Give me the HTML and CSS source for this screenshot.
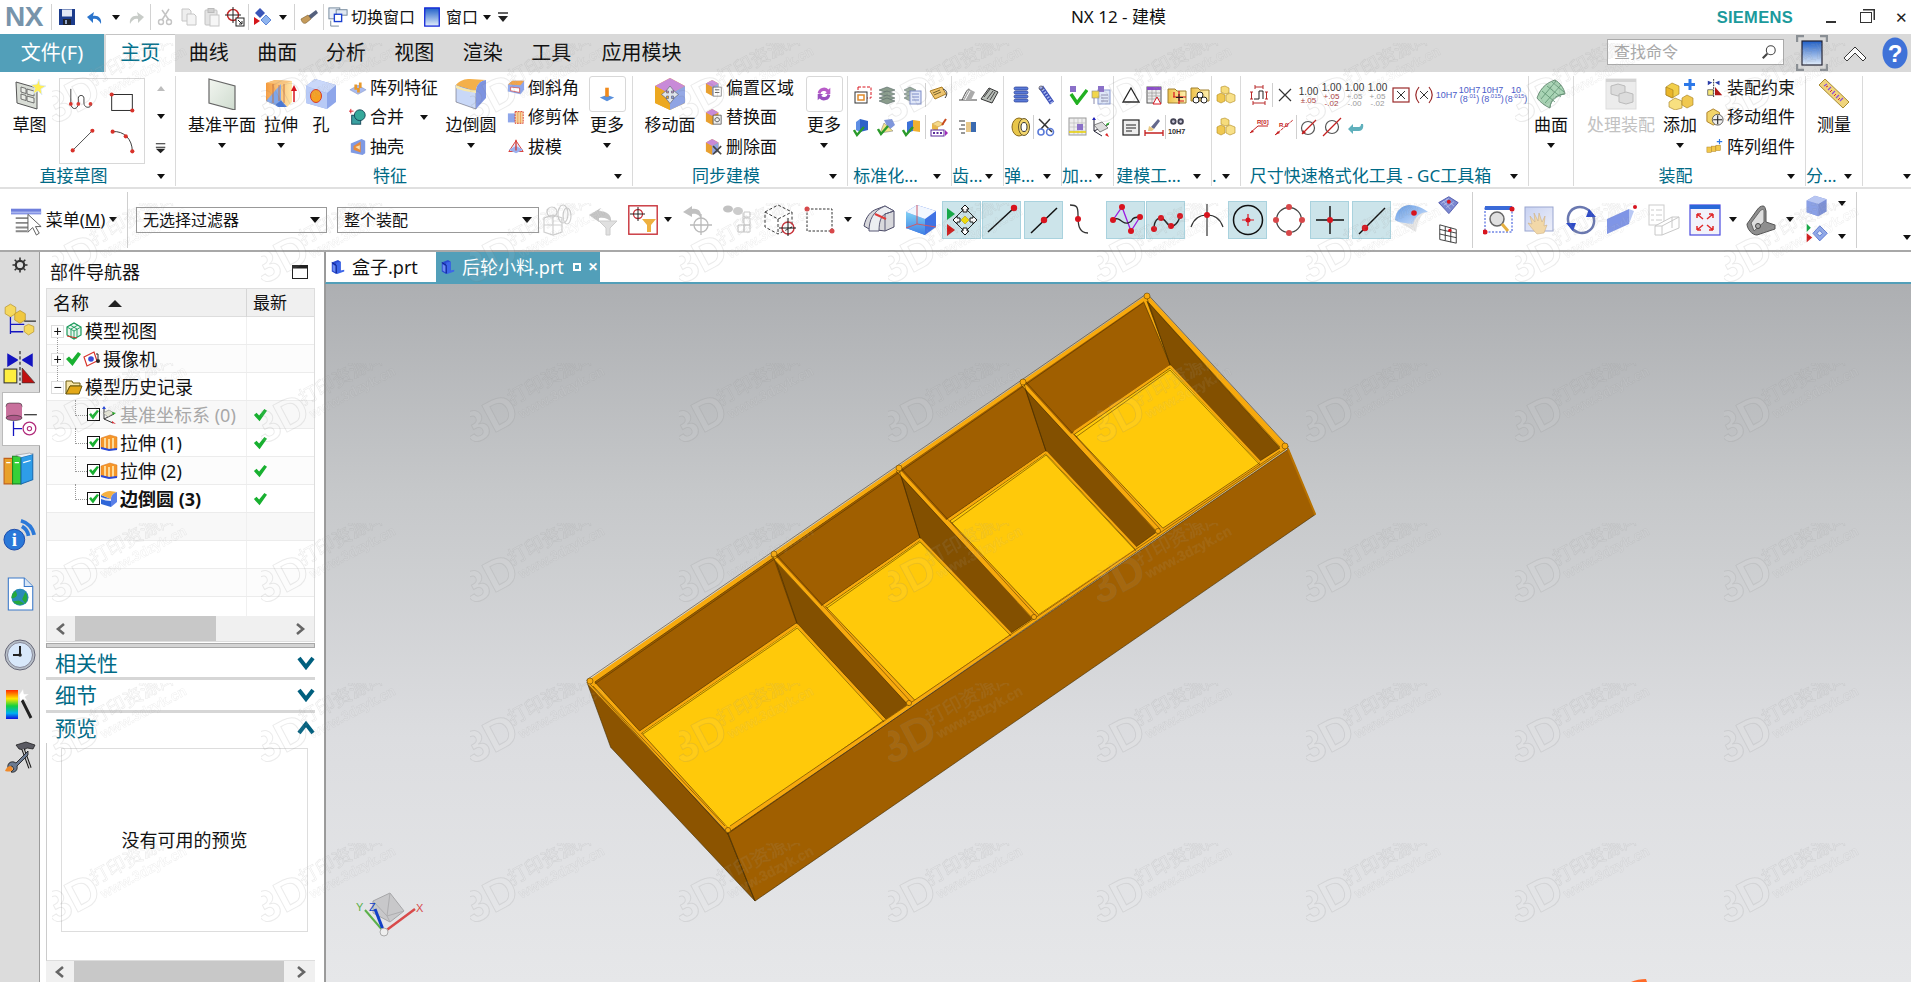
FILE: index.html
```html
<!DOCTYPE html>
<html lang="zh-CN">
<head>
<meta charset="utf-8">
<title>NX 12 - 建模</title>
<link rel="stylesheet" href="styles.css">
</head>
<body>
<svg class="defs" aria-hidden="true">
<defs>
<linearGradient id="gb" x1="0" y1="0" x2="1" y2="1"><stop offset="0" stop-color="#d6e4fb"/><stop offset="1" stop-color="#5f7fd8"/></linearGradient>
<linearGradient id="gb2" x1="0" y1="0" x2="0" y2="1"><stop offset="0" stop-color="#1f5fc8"/><stop offset="1" stop-color="#e3eefb"/></linearGradient>
<linearGradient id="go" x1="0" y1="0" x2="1" y2="0"><stop offset="0" stop-color="#f59a3c"/><stop offset="1" stop-color="#ffe6a8"/></linearGradient>
<linearGradient id="gy" x1="0" y1="0" x2="1" y2="1"><stop offset="0" stop-color="#fff3a8"/><stop offset="1" stop-color="#e3a82a"/></linearGradient>
<linearGradient id="gg" x1="0" y1="0" x2="1" y2="1"><stop offset="0" stop-color="#f2f5f0"/><stop offset="1" stop-color="#cfdccf"/></linearGradient>
<linearGradient id="gr" x1="0" y1="0" x2="0" y2="1"><stop offset="0" stop-color="#ff2a00"/><stop offset=".3" stop-color="#ffe800"/><stop offset=".55" stop-color="#10d040"/><stop offset=".8" stop-color="#00b0f0"/><stop offset="1" stop-color="#1010e0"/></linearGradient>
<linearGradient id="gf" x1="0" y1="0" x2="1" y2="0"><stop offset="0" stop-color="#eec24a"/><stop offset="1" stop-color="#fff0b0"/></linearGradient>
<linearGradient id="gb3" x1="0" y1="0" x2="0" y2="1"><stop offset="0" stop-color="#7fd0f4"/><stop offset="1" stop-color="#3f7fe4"/></linearGradient>
<linearGradient id="gb4" x1="0" y1="0" x2="1" y2="1"><stop offset="0" stop-color="#5f9ae8"/><stop offset="1" stop-color="#d8e6fb"/></linearGradient>
<linearGradient id="gv" x1="0" y1="0" x2="1" y2="1"><stop offset="0" stop-color="#c8d2f2"/><stop offset="1" stop-color="#eef0fa"/></linearGradient>

<symbol id="save" viewBox="0 0 20 20"><rect x="2" y="2" width="16" height="16" fill="#1c3c8c"/><rect x="5" y="2.500" width="10" height="7" fill="#e2e8f4"/><rect x="6" y="12" width="8" height="6" fill="#20242c"/><rect x="8" y="13" width="2" height="4" fill="#8fa3c8"/></symbol>
<symbol id="undo" viewBox="0 0 20 20"><path d="M16 17c1-6-3-9-8-8l1-4-7 5 6 6 0-4c3-1 6 1 8 5z" fill="#2a74cc"/></symbol>
<symbol id="redo" viewBox="0 0 20 20"><path d="M4 17c-1-6 3-9 8-8l-1-4 7 5-6 6 0-4c-3-1-6 1-8 5z" fill="#c8ccc8"/></symbol>
<symbol id="cut" viewBox="0 0 20 20"><path d="M14 2 7 13M7 3l7 10" stroke="#c4c4c4" stroke-width="1.500" fill="none"/><circle cx="6" cy="15" r="2.500" fill="none" stroke="#c4c4c4" stroke-width="1.400"/><circle cx="14" cy="15" r="2.500" fill="none" stroke="#c4c4c4" stroke-width="1.400"/></symbol>
<symbol id="copy" viewBox="0 0 20 20"><path d="M3 2h7l2 2v10H3z" fill="#eee" stroke="#c6c6c6"/><path d="M8 7h7l2 2v9H8z" fill="#f4f4f4" stroke="#c6c6c6"/></symbol>
<symbol id="paste" viewBox="0 0 20 20"><rect x="3" y="3" width="12" height="15" rx="1" fill="#e4e4e4" stroke="#c2c2c2"/><rect x="6" y="1.500" width="6" height="4" fill="#d0d0d0" stroke="#bbb"/><rect x="8" y="8" width="9" height="11" fill="#f6f6f6" stroke="#c6c6c6"/></symbol>
<symbol id="target" viewBox="0 0 20 20"><circle cx="8" cy="8" r="5.500" fill="none" stroke="#c62a2a" stroke-width="1.500"/><path d="M8 0v16M0 8h16" stroke="#222" stroke-width="1"/><rect x="11" y="11" width="8" height="8" fill="#fff" stroke="#222"/><path d="M13 13l4 4M17 14v3h-3" stroke="#222" fill="none"/></symbol>
<symbol id="diam" viewBox="0 0 20 20"><path d="M7 1l5 5-5 5-5-5z" fill="#3a55b8"/><path d="M13 8l5 5-5 5-5-5z" fill="#8fb4ee" stroke="#5f86d8"/><path d="M1 10l6 4-6 4z" fill="#d4151a"/></symbol>
<symbol id="brush" viewBox="0 0 20 20"><path d="M9 9l8-6 2 3-7 6z" fill="#55607c"/><path d="M2 12l7-4 3 4-5 4c-2 1-4 0-5-4z" fill="#c49a5a" stroke="#7a5a2a" stroke-width=".6"/></symbol>
<symbol id="swin" viewBox="0 0 22 22"><rect x="1" y="1" width="12" height="12" fill="#e8eef6" stroke="#6e8296"/><rect x="9" y="3" width="12" height="6" fill="#dfe7f1" stroke="#6e8296"/><rect x="7" y="8" width="8" height="8" fill="#fff" stroke="#1a3fd0" stroke-width="1.500"/><path d="M3 15v6h9" stroke="#6e8296" fill="none"/></symbol>
<symbol id="bwin" viewBox="0 0 18 22"><rect x="1" y="1" width="16" height="20" fill="url(#gb2)" stroke="#1024d8" stroke-width="1.400"/></symbol>
<symbol id="custom" viewBox="0 0 12 12"><path d="M1 2h10" stroke="#222" stroke-width="1.400"/><path d="M1 5h10L6 11z" fill="#222"/></symbol>

<symbol id="sketch" viewBox="0 0 32 32"><path d="M2 4l21 6v21L3 25z" fill="#d9ddd6" stroke="#555"/><path d="M7 9l5 1.500v5L7 14zM13 11l7 2v5l-7-2zM7 16l5 1.500v5L7 21zM13 18l7 2v5l-7-2z" fill="#e9ece6" stroke="#555" stroke-width=".8"/><path d="M25 1l1 6 6 1-5 3 1 6-4-4-5 3 2-6-4-3 6-1z" fill="#ffee55" stroke="#d8e8ff" stroke-width=".8"/></symbol>
<symbol id="profile" viewBox="0 0 32 32"><path d="M3 2v15c0 8 8 8 8 0v-5c0-4 6-4 6 0v5c0 6 8 6 8 1" fill="none" stroke="#333" stroke-width="1"/><circle cx="3" cy="18" r="2" fill="#d8322a"/><circle cx="11" cy="18" r="2" fill="#d8322a"/><circle cx="24" cy="18" r="2" fill="#d8322a"/></symbol>
<symbol id="rectc" viewBox="0 0 32 32"><rect x="5" y="8" width="22" height="17" fill="none" stroke="#222" stroke-width="1"/><circle cx="5" cy="8" r="2.200" fill="#d8322a"/><circle cx="27" cy="25" r="2.200" fill="#d8322a"/></symbol>
<symbol id="linec" viewBox="0 0 32 32"><path d="M5 26 26 5" stroke="#444" stroke-width="1"/><circle cx="5" cy="26" r="2.200" fill="#d8322a"/><circle cx="26" cy="5" r="2.200" fill="#d8322a"/></symbol>
<symbol id="arcc" viewBox="0 0 32 32"><path d="M6 6c12-1 21 8 21 21" fill="none" stroke="#333" stroke-width="1"/><circle cx="6" cy="6" r="2.200" fill="#d8322a"/><circle cx="20" cy="11" r="2.200" fill="#d8322a"/><circle cx="27" cy="27" r="2.200" fill="#d8322a"/></symbol>
<symbol id="mlist" viewBox="0 0 12 14"><path d="M0 2h11M0 6h11" stroke="#222" stroke-width="1.200"/><path d="M0 8h11l-5.500 5z" fill="#222"/></symbol>
<symbol id="datum" viewBox="0 0 32 32"><path d="M3 1l26 7v24L3 25z" fill="url(#gg)" stroke="#666" stroke-width="1.200"/></symbol>
<symbol id="extrude" viewBox="0 0 32 32"><path d="M1 5l9-3 17 1v21l-5 5-6-7-6 5-9-4z" fill="url(#go)"/><path d="M1 5l9-3 17 1-8 3z" fill="#f7c27a"/><path d="M16 6v16l-6 5-9-4" fill="#7fa6ea"/><path d="M8 6v19M14 7v16M19 6v19" stroke="#c8703a" stroke-width=".9" fill="none"/><path d="M10 27l6-5 6 7-9 0z" fill="#4a79d6"/><path d="M29 24V11" stroke="#d8141e" stroke-width="1.500"/><path d="M29 7l3 6h-6z" fill="#d8141e"/></symbol>
<symbol id="hole" viewBox="0 0 32 32"><path d="M1 8l9-7 21 6v17l-9 7-21-6z" fill="#8ea6ea"/><path d="M1 8l21 7v16L1 25z" fill="#b8caf6"/><path d="M1 8l9-7 21 6-9 8z" fill="#cad8fa"/><ellipse cx="11" cy="18" rx="5.500" ry="6.500" fill="#f7a020" stroke="#d83a2a"/></symbol>
<symbol id="patf" viewBox="0 0 20 20"><path d="M1 12l9-5 9 5-9 5z" fill="#aabbee" stroke="#7f93c8" stroke-width=".6"/><path d="M6 6h3v6H6zM11 4h3v6h-3zM9 10h3v5H9z" fill="#e8982a"/></symbol>
<symbol id="unite" viewBox="0 0 20 20"><rect x="3" y="8" width="10" height="10" fill="#3aa0a0" stroke="#145"/><circle cx="12" cy="8" r="6" fill="#35a89a" stroke="#145"/><path d="M1 1v5M-1 3.500h5" stroke="#d8141e" transform="translate(1 0)"/></symbol>
<symbol id="shell" viewBox="0 0 20 20"><path d="M2 6l12-5 4 2v14l-3 2-13-3z" fill="#7f9ae4"/><path d="M5 9l8-5v12l-8-3z" fill="#e88a3a"/><path d="M7 10l5-2v5z" fill="#f7e0b0"/></symbol>
<symbol id="blend" viewBox="0 0 32 32"><path d="M1 7v17l20 7V13z" fill="#c9d8f7" stroke="#667" stroke-width=".6"/><path d="M1 7c4-5 9-6 14-6l16 1c-6 1-10 5-10 11z" fill="#f4b04a"/><path d="M1 10c4 2 13 4 20 5v-3c-8 0-15-2-20-5z" fill="#f9e8a8"/><path d="M21 13c0-6 4-10 10-11v18l-10 11z" fill="#7d93e0"/></symbol>
<symbol id="chamfer" viewBox="0 0 20 20"><path d="M1 6l5-4h13v10l-4 5-14-3z" fill="#8ea6ea"/><path d="M1 6l5-4h13l-4 5z" fill="#f4a44a"/><path d="M4 9l10 1v5L4 13z" fill="#fff" stroke="#d8322a" stroke-width=".7"/></symbol>
<symbol id="trim" viewBox="0 0 20 20"><path d="M1 6h8v10H1z" fill="#8ea6ea"/><path d="M9 4h9v13H9z" fill="#f6d3a0" stroke="#d8322a" stroke-dasharray="2 1"/><path d="M12 4v13M15 4v13" stroke="#e88a3a" stroke-width=".7"/></symbol>
<symbol id="draft" viewBox="0 0 20 20"><path d="M10 3 2 15h16z" fill="#dfe7fa" stroke="#d8322a"/><path d="M2 13l8-4 8 4-8 4z" fill="#9ab0ee"/><path d="M10 2v12" stroke="#d8322a" stroke-width="1.400"/></symbol>
<symbol id="morei" viewBox="0 0 20 20"><path d="M2 14l8-3 8 3-8 4z" fill="#5a90dc"/><rect x="8" y="3" width="4" height="10" fill="#f08a1c"/></symbol>
<symbol id="moveface" viewBox="0 0 32 32"><path d="M16 0 31 8v17l-15 7-15-7V8z" fill="#f4b030"/><path d="M16 0l15 8-15 8-15-8z" fill="#c88ad8"/><path d="M1 8l15 8v16L1 25z" fill="#eca820"/><path d="M31 8v17l-15 7V16z" fill="#8fa4e4"/><path d="M16 8l4 5h-2.500v2h2v-2.500l5 4-5 4V18h-2v2.500H20l-4 5-4-5h2.500V18h-2v2.500l-5-4 5-4V15h2v-2H12z" fill="#dfe4ea" stroke="#667" stroke-width=".7"/></symbol>
<symbol id="fa" viewBox="0 0 20 20"><path d="M8 1l7 4v10l-7 4-7-4V5z" fill="#e8a030"/><path d="M8 1l7 4-7 4-7-4z" fill="#c88ad8"/><path d="M15 5v10l-7 4V9z" fill="#8fa4e4"/><rect x="9" y="9" width="9" height="10" fill="#fff" stroke="#555" stroke-width=".7"/><path d="M11 12h5M11 15h5" stroke="#555"/></symbol>
<symbol id="fb" viewBox="0 0 20 20"><path d="M8 1l7 4v10l-7 4-7-4V5z" fill="#e8a030"/><path d="M8 1l7 4-7 4-7-4z" fill="#c88ad8"/><path d="M9 8h9v10H9z" fill="#eee" stroke="#444" stroke-width=".8"/><path d="M11 13c0-3 5-3 5 0s-5 3-5 0z" fill="none" stroke="#444"/></symbol>
<symbol id="fc" viewBox="0 0 20 20"><path d="M8 1l7 4v10l-7 4-7-4V5z" fill="#e8a030"/><path d="M8 1l7 4-7 4-7-4z" fill="#c88ad8"/><path d="M15 5v10l-7 4V9z" fill="#8fa4e4"/><path d="M9 9l9 9M18 9l-9 9" stroke="#444" stroke-width="1.800"/></symbol>
<symbol id="refresh" viewBox="0 0 20 20"><path d="M3 9a7 7 0 0 1 12-4l2-2v7h-6l2-2a4 4 0 0 0-7 2z" fill="#b85cc8"/><path d="M17 11a7 7 0 0 1-12 4l-2 2v-7h6l-2 2a4 4 0 0 0 7-2z" fill="#9a50c0"/></symbol>

<symbol id="n1" viewBox="0 0 20 20"><rect x="5" y="2" width="13" height="11" fill="none" stroke="#d8141e" stroke-dasharray="3 1.500"/><rect x="2" y="7" width="12" height="11" fill="#fff" stroke="#333"/><rect x="5" y="10" width="6" height="5" fill="none" stroke="#e08a2a" stroke-width="1.500"/></symbol>
<symbol id="n2" viewBox="0 0 20 20"><g fill="#8a9c8c" stroke="#566" stroke-width=".6"><path d="M2 5l8-3 8 3-8 3z"/><path d="M2 9l8-3 8 3-8 3z"/><path d="M2 13l8-3 8 3-8 3z"/><path d="M2 16l8-3 8 3-8 3z"/></g></symbol>
<symbol id="n3" viewBox="0 0 20 20"><g fill="#9aaa9c" stroke="#677" stroke-width=".6"><path d="M2 5l6-3 6 3-6 3z"/><path d="M2 9l6-3 6 3-6 3z"/><path d="M2 13l6-3 6 3-6 3z"/></g><rect x="8" y="6" width="11" height="13" fill="#dfe6f8" stroke="#7c8cc8"/><path d="M10 9h7M10 12h7M10 15h7" stroke="#7c8cc8"/></symbol>
<symbol id="n4" viewBox="0 0 20 20"><path d="M1 6l12-4 4 7-11 5z" fill="#f2c66a" stroke="#a87a20"/><path d="M4 8l7-3M5 10l7-3" stroke="#75602a"/><path d="M14 4c4 1 5 5 2 9" stroke="#333" fill="none"/></symbol>
<symbol id="n5" viewBox="0 0 20 20"><path d="M7 2l8 2v9l-8 2z" fill="#2e62c8"/><path d="M7 2 3 5v8l4 2z" fill="#5e8ee4"/><path d="M1 13l3 5 7-8" stroke="#2a9a2a" stroke-width="2.400" fill="none"/></symbol>
<symbol id="n6" viewBox="0 0 20 20"><path d="M7 3l8-1 3 6-6 5z" fill="#7f96dc"/><path d="M3 16l4-10 9 8z" fill="#f2e38a" stroke="#777" stroke-width=".5"/><path d="M1 12l3 5 7-8" stroke="#2a9a2a" stroke-width="2.400" fill="none"/></symbol>
<symbol id="n7" viewBox="0 0 20 20"><path d="M5 5l6-2v11l-6 2z" fill="#3c72d8"/><path d="M11 3l7 1v11l-7-1z" fill="#f0b030"/><path d="M1 13l3 5 7-8" stroke="#2a9a2a" stroke-width="2.400" fill="none"/></symbol>
<symbol id="n8" viewBox="0 0 20 20"><path d="M3 7l6-3 6 3-6 3z" fill="#f6d98a" stroke="#a87a20" stroke-width=".5"/><path d="M3 7v5l6 3V10z" fill="#e9b64a"/><rect x="2" y="13" width="13" height="6" fill="#fff" stroke="#5c2d9c"/><path d="M4 16h2M7.500 16h2M11 16h2" stroke="#5c2d9c" stroke-width="2"/><path d="M16 13l3 3-3 3z" fill="#a02ab8"/><path d="M13 8l4-6" stroke="#c84a1c" stroke-width="2"/></symbol>
<symbol id="g1" viewBox="0 0 20 20"><path d="M1 15h18M4 15c2-4 5-11 7-11s-1 8 1 11" fill="none" stroke="#444"/><path d="M5 15l6-11 6 3-4 8z" fill="#aaa"/><path d="M7 15l5-9" stroke="#fff"/></symbol>
<symbol id="g2" viewBox="0 0 20 20"><path d="M1 14l8-11 9 4-6 11z" fill="#b8bdb8" stroke="#333"/><path d="M4 12l6-8M7 14l6-8M10 15l5-8" stroke="#444"/></symbol>
<symbol id="g3" viewBox="0 0 20 20"><path d="M1 4h6M3 8h4M1 12h6M3 16h4" stroke="#333" stroke-width="1.200"/><path d="M8 5h9v10H8z" fill="#e8c88a"/><path d="M13 5h5v10h-5z" fill="#3a6ab0"/></symbol>
<symbol id="s1" viewBox="0 0 20 20"><g fill="#5a7ad8" stroke="#253a90" stroke-width=".7"><rect x="3" y="2" width="14" height="3" rx="1.500"/><rect x="3" y="6" width="14" height="3" rx="1.500"/><rect x="3" y="10" width="14" height="3" rx="1.500"/><rect x="3" y="14" width="14" height="3" rx="1.500"/></g></symbol>
<symbol id="s2" viewBox="0 0 20 20"><path d="M5 2 16 18" stroke="#3c50b8" stroke-width="5"/><path d="M5 2 16 18" stroke="#a8b6ee" stroke-width="3" stroke-dasharray="1.500 1.500"/><circle cx="5" cy="3" r="2" fill="none" stroke="#667"/></symbol>
<symbol id="s3" viewBox="0 0 20 20"><ellipse cx="8" cy="10" rx="7" ry="9" fill="#e8c64a" stroke="#8a6a1a"/><ellipse cx="13" cy="10" rx="5.500" ry="8.500" fill="#f3d76e" stroke="#6a5a2a"/><ellipse cx="13" cy="10" rx="3" ry="4.500" fill="#fff" stroke="#333"/></symbol>
<symbol id="s4" viewBox="0 0 20 20"><path d="M3 2l13 13M14 2 5 12" stroke="#333" stroke-width="1.500"/><circle cx="5" cy="15" r="3" fill="none" stroke="#5a7ad8" stroke-width="1.600"/><circle cx="14" cy="15" r="3.500" fill="none" stroke="#5a7ad8" stroke-width="1.600"/></symbol>
<symbol id="a1" viewBox="0 0 20 20"><rect x="2" y="1" width="6" height="6" fill="#8a70c8"/><path d="M3 9l6 9L19 5" stroke="#22b022" stroke-width="3.400" fill="none"/></symbol>
<symbol id="a2" viewBox="0 0 20 20"><rect x="7" y="5" width="12" height="14" fill="#dde6f8" stroke="#8a9ad0"/><rect x="7" y="1" width="6" height="6" fill="#8a70c8"/><rect x="1" y="6" width="7" height="7" fill="#f2d64a" stroke="#888" stroke-width=".6"/><path d="M3 13v6M10 10h7M10 13h7M10 16h7" stroke="#88a"/></symbol>
<symbol id="a3" viewBox="0 0 20 20"><rect x="1" y="1" width="17" height="17" fill="#eee" stroke="#999"/><path d="M1 6h17M1 10h17M1 14h17M6 1v17M10 1v17M14 1v17" stroke="#bbb" stroke-width=".7"/><rect x="9" y="7" width="6" height="6" fill="#8a70c8"/><path d="M1 15h17" stroke="#e8d000" stroke-width="1.500"/></symbol>
<symbol id="a4" viewBox="0 0 20 20"><path d="M3 1v13l8 5M3 14l15-7" stroke="#223" fill="none"/><path d="M3 8l8-3 6 6-8 4z" fill="#ddd" stroke="#555" stroke-width=".7"/><path d="M3 0l-2 3h4z" fill="#22b"/><path d="M19 5l-3 4-1-2z" fill="#2a2"/><path d="M14 18l4 2-2-4z" fill="#d22"/></symbol>
<symbol id="m1" viewBox="0 0 20 20"><path d="M10 3 18 17H2z" fill="#fff" stroke="#222" stroke-width="1.300"/></symbol>
<symbol id="m2" viewBox="0 0 20 20"><rect x="3" y="2" width="14" height="16" fill="#eee" stroke="#555"/><rect x="3" y="2" width="14" height="3" fill="#8a4cc8"/><path d="M3 8h14M3 11h14M3 14h14M8 5v13M12 5v13" stroke="#999" stroke-width=".7"/><path d="M13 12l4 7H9z" fill="#fff" stroke="#d8141e"/></symbol>
<symbol id="m3" viewBox="0 0 20 20"><path d="M1 4h7l2 2h9v12H1z" fill="url(#gf)" stroke="#a08030"/><path d="M12 6v13M6 12h13M7 7v5M12 16h5" stroke="#d8141e" stroke-width="1.200"/><path d="M12 9v7M9 12.500h7" stroke="#222"/></symbol>
<symbol id="m4" viewBox="0 0 20 20"><path d="M1 3h7l2 2h9v11H1z" fill="url(#gf)" stroke="#a08030"/><circle cx="10" cy="10" r="3" fill="#fff" stroke="#222"/><circle cx="6" cy="15" r="3" fill="#fff" stroke="#222"/><circle cx="14" cy="15" r="3" fill="#fff" stroke="#222"/></symbol>
<symbol id="m5" viewBox="0 0 20 20"><rect x="2" y="3" width="16" height="15" fill="#eee" stroke="#222" stroke-width="1.200"/><path d="M5 8h10M5 11h10M5 14h6" stroke="#222"/></symbol>
<symbol id="m6" viewBox="0 0 20 20"><path d="M7 10 14 2l2 2-6 8z" fill="#64688c"/><path d="M5 9l5 3-2 2H4z" fill="#e8c882"/><path d="M1 13v6M19 13v6M1 16h18" stroke="#c42020" stroke-width="1.300"/></symbol>
<symbol id="m7" viewBox="0 0 22 20"><circle cx="7" cy="4" r="3.500" fill="#445"/><circle cx="15" cy="4" r="3.500" fill="#445"/><circle cx="7" cy="4" r="1.500" fill="#ccd"/><circle cx="15" cy="4" r="1.500" fill="#ccd"/><text x="1" y="18" class="t-10h">10H7</text></symbol>
<symbol id="box3" viewBox="0 0 20 20"><g stroke="#b08a20" stroke-width=".6"><path d="M5 2l4-1 4 2v5l-4 1-4-2z" fill="#f6dc7c"/><path d="M1 10l4-2 4 2v6l-4 2-4-2z" fill="#f0c850"/><path d="M10 10l4-2 5 2v6l-5 2-4-2z" fill="#f8e088"/></g></symbol>
<symbol id="d1" viewBox="0 0 20 20"><path d="M1 7h3M2.500 7v7M1 14h3M16 7h3M17.500 7v7M16 14h3" stroke="#b82a2a" fill="none"/><path d="M5 14h5V6h4v8" stroke="#222" fill="none"/><path d="M6 2h8M6 0v4M14 0v4M4 18h12M4 16v4M16 16v4" stroke="#b82a2a" fill="none"/></symbol>
<symbol id="dx" viewBox="0 0 20 20"><path d="M4 4l12 12M16 4 4 16" stroke="#333" stroke-width="1.200"/></symbol>
<symbol id="dbox" viewBox="0 0 20 20"><rect x="2" y="3" width="16" height="14" fill="none" stroke="#9a2a2a" stroke-width="1.200"/><path d="M6 6l8 8M14 6l-8 8" stroke="#333"/></symbol>
<symbol id="dpar" viewBox="0 0 20 20"><path d="M5 2C1 7 1 13 5 18M15 2c4 5 4 11 0 16" stroke="#9a2a2a" fill="none" stroke-width="1.200"/><path d="M6 6l8 8M14 6l-8 8" stroke="#333"/></symbol>
<symbol id="d2" viewBox="0 0 20 20"><path d="M1 16 9 9h10" stroke="#c42020" fill="none"/><path d="M1 16l4-1-2-2z" fill="#c42020"/><text x="8" y="7" class="t-r">R[0]</text></symbol>
<symbol id="d3" viewBox="0 0 20 20"><path d="M1 18 19 3" stroke="#c42020" stroke-dasharray="3 1"/><path d="M1 18l5-2-2-2z" fill="#c42020"/><text x="5" y="10" class="t-r">R.0</text></symbol>
<symbol id="d4" viewBox="0 0 20 20"><circle cx="9" cy="11" r="6.500" fill="none" stroke="#555" stroke-width="1.200"/><path d="M3 17 17 3" stroke="#c42020" stroke-width="1.300"/><path d="M3 17l1-4 3 3z" fill="#c42020"/></symbol>
<symbol id="d5" viewBox="0 0 20 20"><circle cx="10" cy="10" r="6.500" fill="none" stroke="#555" stroke-width="1.200"/><path d="M1 19 19 1" stroke="#c42020" stroke-width="1.300"/></symbol>
<symbol id="d6" viewBox="0 0 20 20"><path d="M3 12l5-5v3h6c1 0 2-1 2-3h2c1 4-1 7-4 7H8v3z" fill="#5fb0bc"/></symbol>
<symbol id="surf" viewBox="0 0 32 32"><path d="M2 20C6 8 14 4 20 2c5 3 9 8 10 14-7 0-15 5-15 14C10 28 5 24 2 20z" fill="#a8d4b4" stroke="#678c74"/><path d="M7 13l13 11M12 8l14 11M17 4l12 10M6 21 21 3M10 25 26 7M15 29c1-7 7-11 14-13" stroke="#5c9070" fill="none" stroke-width=".8"/></symbol>
<symbol id="asm" viewBox="0 0 32 32"><rect x="1" y="1" width="30" height="30" fill="#ececec" stroke="#ddd"/><rect x="1" y="1" width="30" height="3" fill="#d4d4d4"/><g fill="#dcdcdc" stroke="#bbb"><path d="M6 16V8l7-2 7 2v8l-7 2z"/><path d="M14 24v-8l7-2 7 2v8l-7 2z"/></g></symbol>
<symbol id="add" viewBox="0 0 32 32"><g stroke="#a07a20" stroke-width=".6"><path d="M2 9l6-4 7 3v8l-7 4-6-3z" fill="#f2cf4a"/><path d="M2 9l7 3v8l-7-3z" fill="#eab62a"/><path d="M5 24l6-4 7 3v7l-7 2-6-3z" fill="#f8e080"/><path d="M18 20l5-3 6 3v7l-6 3-5-3z" fill="#f0c850"/></g><path d="M26 1v11M20 6.500h11" stroke="#2c78e8" stroke-width="3"/></symbol>
<symbol id="a-con" viewBox="0 0 20 20"><path d="M2 2l5 2-5 3zM15 2l-5 2 5 3z" fill="#2b3ea8"/><path d="M8.500 0v20" stroke="#222" stroke-dasharray="2 1"/><rect x="2" y="12" width="6" height="6" fill="#f7e87a" stroke="#333" stroke-width=".7"/><path d="M10 9l8 9h-8z" fill="#b01818"/></symbol>
<symbol id="a-mov" viewBox="0 0 20 20"><path d="M8 1l7 4v10l-7 4-7-4V5z" fill="#f2d46a" stroke="#a87a20"/><circle cx="13" cy="13" r="6" fill="#eee" stroke="#555"/><path d="M13 8v10M8 13h10" stroke="#222" stroke-width="1.200"/></symbol>
<symbol id="a-pat" viewBox="0 0 20 20"><g fill="#f2c84a" stroke="#a87a20" stroke-width=".5"><rect x="1" y="10" width="5" height="6"/><rect x="6" y="9" width="5" height="6"/><rect x="11" y="8" width="5" height="6"/></g><path d="M15 1v6M12 4h6" stroke="#2c78e8" stroke-width="1.300"/></symbol>
<symbol id="measure" viewBox="0 0 32 32"><path d="M1 7 7 1l24 23-6 6z" fill="#f0d47c" stroke="#a88a30"/><path d="M6 8l3-2M10 12l3-3M14 16l3-3M18 20l3-3M22 23l3-3" stroke="#8a4ce0" stroke-width="1.200"/><path d="M8 9l2-1M12 14l2-2M16 18l2-2M20 22l2-2" stroke="#d8322a"/></symbol>

<symbol id="menu" viewBox="0 0 34 32"><rect x="0" y="4" width="32" height="6" fill="#6f7fdc"/><rect x="0" y="7" width="32" height="2" fill="#a8b4f0"/><path d="M5 14h16M5 19h14M5 24h14M5 28h12" stroke="#888" stroke-width="2"/><path d="M18 10v19l5-5 4 8 3-2-4-7h6z" fill="#fff" stroke="#555"/></symbol>
<symbol id="t1" viewBox="0 0 32 32"><g fill="none" stroke="#d0d0d0" stroke-width="1.200"><path d="M2 14l9-3 9 3v14l-9 3-9-3z"/><path d="M2 21h18M11 11v20"/><circle cx="10" cy="8" r="5"/><ellipse cx="21" cy="10" rx="5" ry="9"/><ellipse cx="25" cy="12" rx="4" ry="8"/></g></symbol>
<symbol id="t2" viewBox="0 0 32 32"><path d="M14 4 2 11l10 7v-4c5-1 10 1 12 4 1-7-4-11-12-11z" fill="#c6c6c6"/><path d="M12 17h18l-7 7v7h-4v-7z" fill="#e0e0e0" stroke="#ccc"/></symbol>
<symbol id="t3" viewBox="0 0 30 30"><rect x=".8" y=".8" width="28.400" height="28.400" fill="#fff" stroke="#c8323a" stroke-width="1.400"/><circle cx="10" cy="9" r="4.500" fill="none" stroke="#c8323a" stroke-width="1.300"/><path d="M10 2v14M2 9h15" stroke="#222"/><path d="M14 14h14l-5 6v7h-4v-7z" fill="#eeb040"/></symbol>
<symbol id="t4" viewBox="0 0 32 32"><path d="M10 2 1 8l9 5v-3c5-1 8 2 9 5 1-7-2-11-9-10z" fill="#c0c0c0"/><circle cx="19" cy="21" r="7" fill="none" stroke="#bbb" stroke-width="1.300"/><path d="M19 10v21M8 21h22" stroke="#bbb" stroke-width="1.300"/></symbol>
<symbol id="t5" viewBox="0 0 32 32"><ellipse cx="6" cy="5" rx="5" ry="3.500" fill="#c2c2c2"/><ellipse cx="16" cy="7" rx="5" ry="4" fill="#ccc"/><path d="M22 8h6v5h-6zM22 14h6v7h-6zM22 21h6v7h-6zM16 21h6v7h-6z" fill="#fff" stroke="#c8c8c8"/><path d="M21 9v10" stroke="#c8c8c8"/></symbol>
<symbol id="t6" viewBox="0 0 32 32"><path d="M1 8l13-7 14 7v15l-14 7-13-7zM1 8l13 7 14-7M14 15v15" fill="none" stroke="#333" stroke-dasharray="3 2"/><circle cx="24" cy="24" r="6" fill="none" stroke="#c8323a" stroke-width="1.400"/><path d="M24 14v18M15 24h17" stroke="#111"/></symbol>
<symbol id="t7" viewBox="0 0 32 32"><rect x="3" y="5" width="25" height="22" fill="none" stroke="#333" stroke-dasharray="2.500 1.500"/><circle cx="3" cy="5" r="2.500" fill="#d8484a"/><circle cx="28" cy="27" r="2.500" fill="#d8484a"/></symbol>
<symbol id="t8" viewBox="0 0 32 32"><path d="M1 22C3 12 8 7 14 5l8-3 9 5v16l-9 4-16-2z" fill="#d8d8dc" stroke="#4a4a66"/><path d="M22 2l9 5-9 3c-4 2-6 8-6 17H6c0-11 4-20 16-25z" fill="#eceef2" stroke="#5a5a76"/><path d="M22 10v17M22 10l9-3" stroke="#5a5a76"/><path d="M12 10l11 5" stroke="#e03a3a" stroke-width="2"/></symbol>
<symbol id="t9" viewBox="0 0 32 32"><path d="M1 8l11-7 19 6v16l-11 8L1 24z" fill="#3f72e4"/><path d="M1 8l19 7v16L1 24z" fill="url(#gb3)"/><path d="M1 8l11-7 19 6-11 8z" fill="#f2f7ff"/><path d="M12 1v19l19 3M1 24l11-4" stroke="#cc5a6a" fill="none"/></symbol>
<symbol id="h1" viewBox="0 0 34 34"><path d="M2 5l8 6-8 6z" fill="#18a848"/><path d="M2 21l8 6-8 6z" fill="#d01818"/><path d="M8 17 20 5l12 12-12 12z" fill="none" stroke="#222"/><path d="M20 2l4 4h-2v3h-4V6h-2zM20 32l4-4h-2v-3h-4v3h-2zM8 17l4-4v2h3v4h-3v2zM32 17l-4-4v2h-3v4h3v2z" fill="#fff" stroke="#111"/><path d="M20 13l4 4-4 4-4-4z" fill="#f4e000" stroke="#b8a000" stroke-width=".6"/></symbol>
<symbol id="h2" viewBox="0 0 34 34"><path d="M3 29 29 5" stroke="#111" stroke-width="1.500"/><circle cx="29" cy="5" r="3.200" fill="#d8141e"/></symbol>
<symbol id="h3" viewBox="0 0 34 34"><path d="M4 30 30 5" stroke="#111" stroke-width="1.500"/><circle cx="17" cy="17" r="3.200" fill="#d8141e"/></symbol>
<symbol id="h4" viewBox="0 0 34 34"><path d="M2 2c7 0 8 2 8 10s0 18 10 18" stroke="#333" stroke-width="1.300" fill="none"/><circle cx="10" cy="16" r="3" fill="#d8141e"/></symbol>
<symbol id="h5" viewBox="0 0 34 34"><path d="M4 17 13 4l9 24 9-14" fill="none" stroke="#9c1ce0" stroke-width="1.300"/><path d="M4 17c4-3 7 0 10 2s8 1 9-2 5-3 8-3" fill="none" stroke="#222" stroke-width="1.300"/><g fill="#d8141e"><circle cx="4" cy="17" r="3"/><circle cx="13" cy="4" r="3"/><circle cx="22" cy="28" r="3"/><circle cx="31" cy="14" r="3"/></g></symbol>
<symbol id="h6" viewBox="0 0 34 34"><path d="M5 26c0-10 5-12 9-10s5 9 10 7 5-5 7-9" fill="none" stroke="#222" stroke-width="1.500"/><g fill="#d8141e"><circle cx="5" cy="26" r="3"/><circle cx="12" cy="15" r="3"/><circle cx="22" cy="23" r="3"/><circle cx="31" cy="13" r="3"/></g></symbol>
<symbol id="h7" viewBox="0 0 34 34"><path d="M17 1v32M1 24c3-9 9-12 16-12s13 3 16 12" fill="none" stroke="#333" stroke-width="1.200"/><circle cx="17" cy="12" r="3" fill="#d8141e"/></symbol>
<symbol id="h8" viewBox="0 0 34 34"><circle cx="17" cy="17" r="14.500" fill="none" stroke="#111" stroke-width="1.500"/><path d="M17 11v12M11 17h12" stroke="#d8141e" stroke-width="1.200"/><circle cx="17" cy="17" r="2.500" fill="#d8141e"/></symbol>
<symbol id="h9" viewBox="0 0 34 34"><circle cx="17" cy="17" r="12.500" fill="none" stroke="#444" stroke-width="1.300"/><g fill="#d8484a"><circle cx="17" cy="4" r="3"/><circle cx="4" cy="17" r="3"/><circle cx="30" cy="17" r="3"/><circle cx="17" cy="30" r="3"/></g></symbol>
<symbol id="h10" viewBox="0 0 34 34"><path d="M17 3v28M3 17h28" stroke="#111" stroke-width="1.400"/><circle cx="17" cy="17" r="3" fill="#d8141e"/></symbol>
<symbol id="h11" viewBox="0 0 34 34"><path d="M4 31 30 5" stroke="#111" stroke-width="1.500"/><circle cx="10" cy="25" r="3.200" fill="#d8141e"/></symbol>
<symbol id="h12" viewBox="0 0 34 34"><path d="M1 17C1 7 8 3 15 2l19 7c-6 1-10 6-12 20z" fill="#e6e6e6"/><path d="M1 17C2 7 8 3 15 2c7 0 14 3 19 7-7 0-13 4-15 12-7-1-14-1-18-4z" fill="url(#gb4)"/><circle cx="20" cy="10" r="2.800" fill="#d8141e"/></symbol>
<symbol id="h13" viewBox="0 0 26 24"><path d="M2 8 14 1l11 7-11 13z" fill="#7a88d0" stroke="#4a52a8"/><path d="M5 9l9-6M8 11l9-6M11 14l9-7M7 6l9 10M11 4l9 8" stroke="#cfd4f2" stroke-width=".7"/><circle cx="14" cy="7" r="2.400" fill="#d8141e"/></symbol>
<symbol id="h14" viewBox="0 0 24 24"><path d="M3 2 21 7v15L3 18z" fill="#fff" stroke="#333"/><path d="M3 7l18 4M3 12l18 4M9 4v15M15 5v16" stroke="#333"/><circle cx="14" cy="8" r="1.800" fill="#d8141e"/></symbol>
<symbol id="v1" viewBox="0 0 32 32"><rect x="2" y="3" width="27" height="25" fill="#fff" stroke="#2a4ad8" stroke-dasharray="2 1.500"/><rect x="2" y="2" width="27" height="4" fill="#3a6ad8"/><circle cx="14" cy="15" r="7" fill="#e0e0e0" stroke="#666" stroke-width="1.500"/><path d="M19 20l6 7" stroke="#e6b040" stroke-width="3"/><circle cx="29" cy="5" r="2.500" fill="#d8141e"/><circle cx="2" cy="28" r="2.500" fill="#d8141e"/></symbol>
<symbol id="v2" viewBox="0 0 32 32"><rect x="1" y="3" width="28" height="24" fill="url(#gv)" stroke="#9aa6d0"/><path d="M13 30c-4-4-7-8-9-11l4 1-2-8 5 6-1-9 4 8 1-8 3 9 3-6-1 10 3-1-3 8z" fill="#f2d8a8" stroke="#c8a878" stroke-width=".5"/></symbol>
<symbol id="v3" viewBox="0 0 32 32"><path d="M6 23a12 12 0 0 1 4-19 13 13 0 0 1 16 5" fill="none" stroke="#6a78b0" stroke-width="2.500"/><path d="M26 9a12 12 0 0 1-4 19A13 13 0 0 1 6 23" fill="none" stroke="#6a78b0" stroke-width="2.500"/><path d="M1 19h10l-3 8zM31 13H21l3-8z" fill="#2a48c8"/></symbol>
<symbol id="v4" viewBox="0 0 32 32"><path d="M1 15l22-10v15L1 30z" fill="#7f95e6"/><path d="M23 5l5 2-5 13z" fill="#b8c8f4"/><circle cx="29" cy="3" r="2" fill="#d8141e"/></symbol>
<symbol id="v5" viewBox="0 0 32 32"><rect x="1" y="1" width="15" height="20" fill="#fff" stroke="#ccc"/><path d="M3 6h3M8 6h6M3 11h3M8 11h6M3 16h3M8 16h6" stroke="#ccc"/><path d="M7 22l17-9h7v11L14 31H7zM7 22h7v9M14 22l17-9M24 13v11" fill="#fff" stroke="#c8c8c8"/></symbol>
<symbol id="v6" viewBox="0 0 32 32"><rect x="1" y="1" width="30" height="30" fill="#f2f2fa" stroke="#4a4ae0" stroke-width="1.200"/><rect x="1" y="1" width="30" height="4" fill="#2a68d8"/><path d="M8 10l6 5M8 10h4M8 10v4M24 10l-6 5M24 10h-4M24 10v4M8 26l6-5M8 26h4M8 26v-4M24 26l-6-5M24 26h-4M24 26v-4" stroke="#e0282a" stroke-width="1.500" fill="none"/></symbol>
<symbol id="v7" viewBox="0 0 32 32"><path d="M2 20 12 6c2-3 4-4 6-4s2 2 3 5l0 11 9 3v4L12 31c-5 0-10-6-10-11z" fill="#8e8e8e" stroke="#555"/><path d="M6 19l9-12c2-2 4-2 4 0v11L9 27z" fill="#dedede" stroke="#666"/><circle cx="13" cy="22" r="2.500" fill="#aaa" stroke="#444"/></symbol>
<symbol id="v8" viewBox="0 0 32 32"><path d="M1 8l12-7 17 5v18l-12 7-17-6z" fill="#7c90d8"/><path d="M1 8l17 5v18L1 25z" fill="#8aa0e6"/><path d="M1 8l12-7 17 5-12 7z" fill="#b8c6f2"/></symbol>
<symbol id="v9" viewBox="0 0 32 32"><path d="M1 1l6 6-6 6z" fill="#18a848"/><path d="M1 15l8 6-8 7z" fill="#d01818"/><path d="M10 15 20 4l11 11-11 11z" fill="#8fa8e8" stroke="#3a5ac8"/><path d="M16 15l4-4 4 4-4 4z" fill="#e2ecfb" stroke="#3a5ac8"/></symbol>
<symbol id="part" viewBox="0 0 18 18"><path d="M2 4l7-3 3 2v11l-5 3-5-3z" fill="#2a4ad0"/><path d="M7 8V4l5-1v10l4-1v2l-8 3z" fill="#3d66e8"/><path d="M2 4l5 3v9" stroke="#0e1e80" fill="none"/><path d="M3 6v7l3 2V8z" fill="#6d8cf0"/></symbol>

<symbol id="ns1" viewBox="0 0 32 32"><g stroke="#b08a20" stroke-width=".6"><path d="M2 5l5-3 5 3v6l-5 3-5-3z" fill="#f5d85e"/><path d="M11 11l5-3 5 3v6l-5 3-5-3z" fill="#f0c840"/><path d="M20 23l4-2 5 2v5l-5 3-4-3z" fill="#f5d85e"/></g><path d="M7 14v16M7 28h12M7 21h13" stroke="#1414c0" stroke-width="1.200" fill="none"/><path d="M20 18h11" stroke="#111"/></symbol>
<symbol id="ns2" viewBox="0 0 32 32"><path d="M4 2l10 6v1L4 15z M28 2l-10 6v1l10 6z" fill="#1414c0"/><path d="M16 0v32" stroke="#111" stroke-dasharray="3 2"/><rect x="1" y="17" width="12" height="13" fill="#ffef40" stroke="#333"/><path d="M18 16l12 14H18z" fill="#c01010" stroke="#333" stroke-width=".6"/></symbol>
<symbol id="ns3" viewBox="0 0 32 32"><rect x="1" y="1" width="15" height="6" rx="3" fill="#c8709c" stroke="#222" stroke-width=".5"/><rect x="1" y="4" width="15" height="11" fill="#c8709c"/><ellipse cx="8.500" cy="15" rx="7.500" ry="2.500" fill="#b05a8a" stroke="#222" stroke-width=".5"/><path d="M18 12h12" stroke="#111"/><path d="M8 18v14M8 25h8" stroke="#1414c0" stroke-width="1.200" fill="none"/><circle cx="23" cy="25" r="6" fill="none" stroke="#b02a7a" stroke-width="1.200"/><circle cx="23" cy="25" r="2" fill="none" stroke="#b02a7a"/></symbol>
<symbol id="ns4" viewBox="0 0 32 32"><path d="M1 6h8v24H1z" fill="#e8a02a" stroke="#c0601a"/><path d="M9 4h8v26H9z" fill="#36d038" stroke="#1a8a20"/><path d="M17 5l11-3v24l-11 4z" fill="#2e9de8" stroke="#1a6ab0"/><path d="M17 5 12 3 25 1l3 1" fill="#e8f0f8" stroke="#888" stroke-width=".5"/><path d="M3 10h4M11 10h4M19 10l7-2" stroke="#fff"/></symbol>
<symbol id="ns5" viewBox="0 0 36 36"><circle cx="12" cy="24" r="11" fill="#2a78d8"/><circle cx="12" cy="24" r="11" fill="none" stroke="#1a48a8"/><text x="12" y="31" class="t-i">i</text><path d="M20 10a14 14 0 0 1 7 10M19 4a20 20 0 0 1 14 15" fill="none" stroke="#2a78d8" stroke-width="4"/></symbol>
<symbol id="ns6" viewBox="0 0 32 32"><path d="M5 1h15l8 8v22H5z" fill="#fff" stroke="#3a78c8"/><path d="M20 1v8h8" fill="#d8e6f6" stroke="#3a78c8"/><circle cx="16" cy="19" r="8" fill="#2a8ab8"/><path d="M12 13a8 8 0 0 0-4 7c3 0 6-2 5-4zM21 14c3 4 2 8 0 11l-3-4zM9 23c3 3 8 4 11 2l-5-3z" fill="#24a83c"/></symbol>
<symbol id="ns7" viewBox="0 0 32 32"><circle cx="16" cy="16" r="15" fill="#b8c0c8" stroke="#667"/><circle cx="16" cy="16" r="12.500" fill="#d8e8fa" stroke="#889"/><path d="M16 7v9h-7" stroke="#222" stroke-width="2" fill="none"/><circle cx="16" cy="16" r="1.800" fill="#222"/></symbol>
<symbol id="ns8" viewBox="0 0 32 32"><rect x="2" y="2" width="12" height="29" fill="url(#gr)"/><path d="M17 10l10 20" stroke="#222" stroke-width="3"/><path d="M15 7l4-6 1 5 5 0-4 3 3 5-5-3-3 3z" fill="#fff" stroke="#ddd" stroke-width=".5"/></symbol>
<symbol id="ns9" viewBox="0 0 32 32"><path d="M12 4 22 1l9 3-2 4-6-1-3 2-5-1z" fill="#5a5a62" stroke="#111" stroke-width=".7"/><path d="M19 8l7 19" stroke="#111" stroke-width="3.400"/><path d="M19 8l7 19" stroke="#c8c8c8" stroke-width="1.400"/><path d="M24 10 12 22l-2-1c-4-1-7 2-6 6l4-2 2 3-3 3c4 1 7-2 6-6l11-11z" fill="#6a7a92" stroke="#111" stroke-width=".8"/><path d="M1 30c1-3 3-5 6-5l2 3c-1 3-4 3-8 2z" fill="#f08a2a"/></symbol>
<symbol id="nv" viewBox="0 0 18 18"><path d="M2 5l7-4 7 4v8l-7 4-7-4z" fill="#e8f6ee" stroke="#1a9a5a" stroke-width="1.200"/><path d="M2 5l7 4 7-4M9 9v8M5 3l7 4v8M13 3 6 7v8" stroke="#1a9a5a" fill="none" stroke-width=".9"/><path d="M2 14l10 2" stroke="#d8322a"/></symbol>
<symbol id="cam" viewBox="0 0 18 18"><path d="M1 7l10-5 3 9-10 5z" fill="#fff" stroke="#d8322a" stroke-width="1.200"/><circle cx="8" cy="9" r="2.800" fill="#3a4ad8"/><circle cx="15" cy="11" r="2" fill="#222"/><path d="M13 4h2v5" stroke="#222" fill="none"/></symbol>
<symbol id="folder" viewBox="0 0 18 18"><path d="M1 3h6l1 2h7v3H5l-4 8z" fill="#f8e6a8" stroke="#6a5a10"/><path d="M5 8h12l-3 8H1z" fill="#e3a818" stroke="#6a5a10"/></symbol>
<symbol id="csys" viewBox="0 0 18 18"><path d="M4 1v12l9 4M4 13l10-5" stroke="#333" fill="none"/><path d="M3 7l6-3 5 3-6 4z" fill="#e8e8d8" stroke="#666" stroke-width=".5"/><path d="M4 0 2 3h4z" fill="#2a4ad8"/><path d="M16 7l-4-1 1 3z" fill="#28a828"/><path d="M16 18l-4-3 0 2z" fill="#d8222a"/></symbol>
<symbol id="exm" viewBox="0 0 18 18"><path d="M1 4l9-3 7 2v12l-7 1-9-2z" fill="#f5962a" stroke="#d8741a" stroke-width=".5"/><path d="M5 4v10M9 5v10M13 4v11" stroke="#fff2c0" stroke-width="1.500"/><path d="M1 14l8 2 8-1" stroke="#2a4ad8" stroke-width="2" fill="none"/></symbol>
<symbol id="ebl" viewBox="0 0 18 18"><path d="M1 5v9l10 3V9z" fill="#2f66d8"/><path d="M1 5c3-3 6-4 9-4l7 1c-3 1-6 3-6 7z" fill="#f5b040"/><path d="M1 7c3 1 6 2 10 2v2C7 11 4 10 1 9z" fill="#e8e8f5"/><path d="M11 9c0-4 3-6 6-7v10l-6 5z" fill="#5a80e8"/></symbol>
<symbol id="chk" viewBox="0 0 16 16"><path d="M1 8l3-2.500 3 3L13 1l3 2-8.500 12z" fill="#18b030"/></symbol>
<symbol id="cbx" viewBox="0 0 14 14"><rect x=".5" y=".5" width="12" height="12" fill="#fff" stroke="#111"/><path d="M2 6.500l2-1.500 1.500 2L10 2l2 1-6 8.500z" fill="#18b030"/></symbol>
<symbol id="wmax" viewBox="0 0 16 14"><rect x=".5" y=".5" width="15" height="13" fill="#fff" stroke="#222"/><rect x=".5" y=".5" width="15" height="3" fill="#222"/></symbol>
<symbol id="gear" viewBox="0 0 16 16"><circle cx="8" cy="8" r="4.200" fill="none" stroke="#333" stroke-width="2.200"/><path d="M8 .5v3M8 12.500v3M.5 8h3M12.500 8h3M2.700 2.700l2 2M11.300 11.300l2 2M13.300 2.700l-2 2M4.700 11.300l-2 2" stroke="#333" stroke-width="1.600"/></symbol>
<symbol id="cd" viewBox="0 0 18 14"><path d="M2 2l7 9 7-9" fill="none" stroke="#005f7e" stroke-width="4"/></symbol>
<symbol id="cu" viewBox="0 0 18 14"><path d="M2 12 9 3l7 9" fill="none" stroke="#005f7e" stroke-width="4"/></symbol>
<symbol id="la" viewBox="0 0 12 14"><path d="M9 2 3 7l6 5" fill="none" stroke="#666" stroke-width="2.600"/></symbol>
<symbol id="ra" viewBox="0 0 12 14"><path d="M3 2l6 5-6 5" fill="none" stroke="#666" stroke-width="2.600"/></symbol>
<symbol id="find" viewBox="0 0 18 18"><circle cx="11" cy="7" r="5" fill="#fff" stroke="#444" stroke-width="1.200"/><path d="M7 11l-5 5" stroke="#444" stroke-width="2.400"/></symbol>
<symbol id="full" viewBox="0 0 32 36"><path d="M1 7V1h7M24 1h7v6M1 29v6h7M24 35h7v-6" fill="none" stroke="#8a8f94" stroke-width="2.400"/><rect x="6" y="6" width="20" height="24" fill="url(#gb2)" stroke="#223" stroke-width="1.200"/></symbol>
<symbol id="upc" viewBox="0 0 26 18"><path d="M2 14 13 3l11 11-3 3-8-8-8 8z" fill="#fff" stroke="#333"/></symbol>
<symbol id="help" viewBox="0 0 26 32"><ellipse cx="13" cy="16" rx="12.500" ry="15.500" fill="#3f72d8"/><text x="13" y="25" class="t-q">?</text></symbol>
</defs>
</svg>

<header class="titlebar">
  <div class="logo">NX</div>
  <div class="cell sep"></div>
  <div class="cell"><svg class="s20"><use href="#save"/></svg></div>
  <div class="cell"><svg class="s20"><use href="#undo"/></svg></div>
  <div class="cell"><i class="caret"></i></div>
  <div class="cell"><svg class="s20"><use href="#redo"/></svg></div>
  <div class="cell sep"></div>
  <div class="cell"><svg class="s20"><use href="#cut"/></svg></div>
  <div class="cell"><svg class="s20"><use href="#copy"/></svg></div>
  <div class="cell"><svg class="s20"><use href="#paste"/></svg></div>
  <div class="cell"><svg class="s20"><use href="#target"/></svg></div>
  <div class="cell sep"></div>
  <div class="cell"><svg class="s20"><use href="#diam"/></svg></div>
  <div class="cell"><i class="caret"></i></div>
  <div class="cell sep"></div>
  <div class="cell"><svg class="s20"><use href="#brush"/></svg></div>
  <div class="cell sep"></div>
  <div class="cell"><svg class="s20"><use href="#swin"/></svg></div>
  <div class="qtext">切换窗口</div>
  <div class="cell"><svg class="s20"><use href="#bwin"/></svg></div>
  <div class="qtext">窗口</div>
  <div class="cell"><i class="caret"></i></div>
  <div class="cell"><svg class="s12"><use href="#custom"/></svg></div>
  <div class="apptitle">NX 12 - 建模</div>
  <div class="siemens">SIEMENS</div>
  <div class="winbtn min"></div>
  <div class="winbtn rest"></div>
  <div class="winbtn close">✕</div>
</header>

<nav class="tabs">
  <div class="filetab">文件(F)</div>
  <div class="tab active">主页</div>
  <div class="tab">曲线</div>
  <div class="tab">曲面</div>
  <div class="tab">分析</div>
  <div class="tab">视图</div>
  <div class="tab">渲染</div>
  <div class="tab">工具</div>
  <div class="tab wide">应用模块</div>
  <div class="search"><span>查找命令</span><svg class="s16"><use href="#find"/></svg></div>
  <svg class="fullbtn"><use href="#full"/></svg>
  <svg class="upbtn"><use href="#upc"/></svg>
  <svg class="helpbtn"><use href="#help"/></svg>
</nav>

<section class="ribbon">
  <div class="grp g1">
    <div class="gbody b1">
      <div class="lg"><svg class="s32"><use href="#sketch"/></svg><span>草图</span></div>
      <div class="gallery">
        <svg class="s30"><use href="#profile"/></svg><svg class="s30"><use href="#rectc"/></svg>
        <svg class="s30"><use href="#linec"/></svg><svg class="s30"><use href="#arcc"/></svg>
      </div>
      <div class="galside"><i class="caret up"></i><i class="caret"></i><svg class="s12"><use href="#mlist"/></svg></div>
    </div>
    <div class="glabel"><span>直接草图</span><i class="caret"></i></div>
  </div>
  <div class="grp g2">
    <div class="gbody b2">
      <div class="lg"><svg class="s32"><use href="#datum"/></svg><span>基准平面</span><i class="caret"></i></div>
      <div class="lg"><svg class="s32"><use href="#extrude"/></svg><span>拉伸</span><i class="caret"></i></div>
      <div class="lg"><svg class="s32"><use href="#hole"/></svg><span>孔</span></div>
      <div class="col pl8">
        <div class="sm"><svg class="s18"><use href="#patf"/></svg><span>阵列特征</span></div>
        <div class="sm"><svg class="s18"><use href="#unite"/></svg><span>合并</span><i class="caret ml"></i></div>
        <div class="sm"><svg class="s18"><use href="#shell"/></svg><span>抽壳</span></div>
      </div>
      <div class="lg"><svg class="s32"><use href="#blend"/></svg><span>边倒圆</span><i class="caret"></i></div>
      <div class="col pl6">
        <div class="sm"><svg class="s18"><use href="#chamfer"/></svg><span>倒斜角</span></div>
        <div class="sm"><svg class="s18"><use href="#trim"/></svg><span>修剪体</span></div>
        <div class="sm"><svg class="s18"><use href="#draft"/></svg><span>拔模</span></div>
      </div>
      <div class="lg more"><div class="morebox"><svg class="s18"><use href="#morei"/></svg></div><span>更多</span><i class="caret"></i></div>
    </div>
    <div class="glabel"><span>特征</span><i class="caret"></i></div>
  </div>
  <div class="grp g3">
    <div class="gbody b3">
      <div class="lg"><svg class="s32"><use href="#moveface"/></svg><span>移动面</span></div>
      <div class="col pl5">
        <div class="sm"><svg class="s18"><use href="#fa"/></svg><span>偏置区域</span></div>
        <div class="sm"><svg class="s18"><use href="#fb"/></svg><span>替换面</span></div>
        <div class="sm"><svg class="s18"><use href="#fc"/></svg><span>删除面</span></div>
      </div>
      <div class="lg more"><div class="morebox"><svg class="s18"><use href="#refresh"/></svg></div><span>更多</span><i class="caret"></i></div>
    </div>
    <div class="glabel"><span>同步建模</span><i class="caret"></i></div>
  </div>
  <div class="grp g4">
    <div class="gbody ig ig4">
      <svg class="s20"><use href="#n1"/></svg><svg class="s20"><use href="#n2"/></svg><svg class="s20"><use href="#n3"/></svg><div class="lsep"><svg class="s20"><use href="#n4"/></svg></div>
      <svg class="s20"><use href="#n5"/></svg><svg class="s20"><use href="#n6"/></svg><svg class="s20"><use href="#n7"/></svg><div class="lsep"><svg class="s20"><use href="#n8"/></svg></div>
    </div>
    <div class="glabel"><span>标准化...</span><i class="caret"></i></div>
  </div>
  <div class="grp g5">
    <div class="gbody ig ig5">
      <svg class="s20"><use href="#g1"/></svg><svg class="s20"><use href="#g2"/></svg>
      <svg class="s20"><use href="#g3"/></svg>
    </div>
    <div class="glabel"><span>齿...</span><i class="caret"></i></div>
  </div>
  <div class="grp g6">
    <div class="gbody ig ig6">
      <svg class="s20"><use href="#s1"/></svg><svg class="s20"><use href="#s2"/></svg>
      <svg class="s20"><use href="#s3"/></svg><div class="lsep"><svg class="s20"><use href="#s4"/></svg></div>
    </div>
    <div class="glabel"><span>弹...</span><i class="caret"></i></div>
  </div>
  <div class="grp g7">
    <div class="gbody ig ig7">
      <svg class="s20"><use href="#a1"/></svg><svg class="s20"><use href="#a2"/></svg>
      <svg class="s20"><use href="#a3"/></svg><svg class="s20"><use href="#a4"/></svg>
    </div>
    <div class="glabel"><span>加...</span><i class="caret"></i></div>
  </div>
  <div class="grp g8">
    <div class="gbody ig ig8">
      <svg class="s20"><use href="#m1"/></svg><svg class="s20"><use href="#m2"/></svg><svg class="s20"><use href="#m3"/></svg><svg class="s20"><use href="#m4"/></svg>
      <svg class="s20"><use href="#m5"/></svg><svg class="s20"><use href="#m6"/></svg><div class="lsep"><svg class="s20"><use href="#m7"/></svg></div>
    </div>
    <div class="glabel"><span>建模工...</span><i class="caret"></i></div>
  </div>
  <div class="grp g9">
    <div class="gbody ig ig9">
      <svg class="s20"><use href="#box3"/></svg>
      <svg class="s20"><use href="#box3"/></svg>
    </div>
    <div class="glabel"><span>.</span><i class="caret"></i></div>
  </div>
  <div class="grp g10">
    <div class="gbody ig ig10">
      <svg class="s20"><use href="#d1"/></svg><div class="lsep"><svg class="s20"><use href="#dx"/></svg></div>
      <div class="tol"><b>1.00</b><em>±.05</em></div><div class="tol"><b>1.00</b><em>+.05<br>-.02</em></div><div class="tol"><b>1.00</b><em class="gr">+.05<br>-.00</em></div><div class="tol"><b>1.00</b><em class="gr">+.05<br>-.02</em></div>
      <svg class="s20"><use href="#dbox"/></svg><svg class="s20"><use href="#dpar"/></svg>
      <div class="fit">10H7</div><div class="fit two">10H7<br>(8<sup>.01</sup>)</div><div class="fit two">10H7<br>(8<sup>.015</sup>)</div><div class="fit two">10<br>(8<sup>.015</sup>)</div>
      <svg class="s20"><use href="#d2"/></svg><div class="rsep"><svg class="s20"><use href="#d3"/></svg></div>
      <svg class="s20"><use href="#d4"/></svg><svg class="s20"><use href="#d5"/></svg><svg class="s20"><use href="#d6"/></svg>
    </div>
    <div class="glabel"><span>尺寸快速格式化工具 - GC工具箱</span><i class="caret"></i></div>
  </div>
  <div class="grp g11">
    <div class="gbody b11">
      <div class="lg"><svg class="s32"><use href="#surf"/></svg><span>曲面</span><i class="caret"></i></div>
    </div>
    <div class="glabel"></div>
  </div>
  <div class="grp g12">
    <div class="gbody b12">
      <div class="lg off"><svg class="s32"><use href="#asm"/></svg><span>处理装配</span></div>
      <div class="lg"><svg class="s32"><use href="#add"/></svg><span>添加</span><i class="caret"></i></div>
      <div class="col pl6">
        <div class="sm"><svg class="s18"><use href="#a-con"/></svg><span>装配约束</span></div>
        <div class="sm"><svg class="s18"><use href="#a-mov"/></svg><span>移动组件</span></div>
        <div class="sm"><svg class="s18"><use href="#a-pat"/></svg><span>阵列组件</span></div>
      </div>
    </div>
    <div class="glabel"><span>装配</span><i class="caret"></i></div>
  </div>
  <div class="grp g13">
    <div class="gbody b11">
      <div class="lg"><svg class="s32"><use href="#measure"/></svg><span>测量</span></div>
    </div>
    <div class="glabel"><span>分...</span><i class="caret"></i></div>
  </div>
  <div class="grp g14">
    <div class="gbody"></div>
    <div class="glabel end"><i class="caret"></i></div>
  </div>
</section>

<section class="toolbar">
  <svg class="s32"><use href="#menu"/></svg>
  <div class="menutext">菜单(<u>M</u>)</div>
  <i class="caret"></i>
  <div class="vsep"></div>
  <div class="combo"><span>无选择过滤器</span><i class="caret big"></i></div>
  <div class="combo wide2"><span>整个装配</span><i class="caret big"></i></div>
  <svg class="s32"><use href="#t1"/></svg>
  <svg class="s32"><use href="#t2"/></svg>
  <svg class="s30"><use href="#t3"/></svg>
  <i class="caret"></i>
  <svg class="s32"><use href="#t4"/></svg>
  <svg class="s32"><use href="#t5"/></svg>
  <svg class="s32"><use href="#t6"/></svg>
  <svg class="s32"><use href="#t7"/></svg>
  <i class="caret"></i>
  <svg class="s32"><use href="#t8"/></svg>
  <svg class="s32"><use href="#t9"/></svg>
  <div class="tile"><svg class="s34"><use href="#h1"/></svg></div>
  <div class="tile"><svg class="s34"><use href="#h2"/></svg></div>
  <div class="tile"><svg class="s34"><use href="#h3"/></svg></div>
  <svg class="s34"><use href="#h4"/></svg>
  <div class="tile"><svg class="s34"><use href="#h5"/></svg></div>
  <div class="tile"><svg class="s34"><use href="#h6"/></svg></div>
  <svg class="s34"><use href="#h7"/></svg>
  <div class="tile"><svg class="s34"><use href="#h8"/></svg></div>
  <svg class="s34"><use href="#h9"/></svg>
  <div class="tile"><svg class="s34"><use href="#h10"/></svg></div>
  <div class="tile"><svg class="s34"><use href="#h11"/></svg></div>
  <svg class="s34"><use href="#h12"/></svg>
  <div class="stack"><svg class="s24"><use href="#h13"/></svg><svg class="s24"><use href="#h14"/></svg></div>
  <div class="vsep"></div>
  <svg class="s32"><use href="#v1"/></svg>
  <svg class="s32"><use href="#v2"/></svg>
  <svg class="s32"><use href="#v3"/></svg>
  <svg class="s32"><use href="#v4"/></svg>
  <svg class="s32"><use href="#v5"/></svg>
  <svg class="s32"><use href="#v6"/></svg>
  <i class="caret"></i>
  <svg class="s32"><use href="#v7"/></svg>
  <i class="caret"></i>
  <div class="stack"><svg class="s24"><use href="#v8"/></svg><svg class="s24"><use href="#v9"/></svg></div>
  <div class="stack carets"><i class="caret"></i><i class="caret"></i></div>
  <div class="vsep"></div>
  <div class="tbend"><i class="caret"></i></div>
</section>

<main class="work">
  <aside class="strip">
    <div class="st"><svg class="s16"><use href="#gear"/></svg></div>
    <i></i>
    <div class="st"><svg class="s34"><use href="#ns1"/></svg></div>
    <div class="st"><svg class="s34"><use href="#ns2"/></svg></div>
    <div class="st on"><svg class="s34"><use href="#ns3"/></svg></div>
    <div class="st"><svg class="s34"><use href="#ns4"/></svg></div>
    <div class="st"><svg class="s34"><use href="#ns5"/></svg></div>
    <div class="st"><svg class="s34"><use href="#ns6"/></svg></div>
    <div class="st"><svg class="s32"><use href="#ns7"/></svg></div>
    <div class="st"><svg class="s32"><use href="#ns8"/></svg></div>
    <div class="st"><svg class="s32"><use href="#ns9"/></svg></div>
  </aside>

  <aside class="nav">
    <div class="navhead"><span>部件导航器</span><svg class="wmaxi"><use href="#wmax"/></svg></div>
    <div class="tree">
      <div class="thead"><div class="th1"><span>名称</span><i class="caret upb"></i></div><div class="th2">最新</div></div>
      <div class="row"><div class="nm"><b class="exp">+</b><svg class="s18"><use href="#nv"/></svg><span>模型视图</span></div><div></div></div>
      <div class="row alt"><div class="nm dotdown"><b class="exp">+</b><svg class="s16"><use href="#chk"/></svg><svg class="s18"><use href="#cam"/></svg><span>摄像机</span></div><div></div></div>
      <div class="row"><div class="nm"><b class="exp">−</b><svg class="s18"><use href="#folder"/></svg><span>模型历史记录</span></div><div></div></div>
      <div class="row alt2"><div class="nm leaf"><svg class="s14"><use href="#cbx"/></svg><svg class="s18"><use href="#csys"/></svg><span class="dim">基准坐标系 (0)</span></div><div class="ok"><svg class="s14"><use href="#chk"/></svg></div></div>
      <div class="row"><div class="nm leaf"><svg class="s14"><use href="#cbx"/></svg><svg class="s18"><use href="#exm"/></svg><span>拉伸 (1)</span></div><div class="ok"><svg class="s14"><use href="#chk"/></svg></div></div>
      <div class="row alt"><div class="nm leaf"><svg class="s14"><use href="#cbx"/></svg><svg class="s18"><use href="#exm"/></svg><span>拉伸 (2)</span></div><div class="ok"><svg class="s14"><use href="#chk"/></svg></div></div>
      <div class="row"><div class="nm leaf last"><svg class="s14"><use href="#cbx"/></svg><svg class="s18"><use href="#ebl"/></svg><strong>边倒圆 (3)</strong></div><div class="ok"><svg class="s14"><use href="#chk"/></svg></div></div>
      <div class="row alt2"><div class="nm"></div><div></div></div>
      <div class="row"><div class="nm"></div><div></div></div>
      <div class="row alt"><div class="nm"></div><div></div></div>
      <div class="row short"><div class="nm"></div><div></div></div>
      <div class="hscroll"><svg class="arrow"><use href="#la"/></svg><div class="thumb t1"></div><svg class="arrow ra"><use href="#ra"/></svg></div>
    </div>
    <div class="splitter"></div>
    <div class="sect line first"><span>相关性</span><svg class="chev"><use href="#cd"/></svg></div>
    <div class="sect line"><span>细节</span><svg class="chev"><use href="#cd"/></svg></div>
    <div class="sect open"><span>预览</span><svg class="chev"><use href="#cu"/></svg></div>
    <div class="prevwrap">
      <div class="preview">没有可用的预览</div>
    </div>
    <div class="hscroll low"><svg class="arrow"><use href="#la"/></svg><div class="thumb t2"></div><svg class="arrow ra"><use href="#ra"/></svg></div>
  </aside>

  <section class="gfx">
    <div class="doctabs">
      <div class="doc"><svg class="s16"><use href="#part"/></svg><span>盒子.prt</span></div>
      <div class="doc cur"><svg class="s16"><use href="#part"/></svg><span>后轮小料.prt</span><em class="docpin"></em><em class="docx">✕</em></div>
    </div>
    <div class="viewport">
      <svg class="model" viewBox="325 284 1586 698">
        <polygon points="586,682 1146,295 1287,447 727,833" fill="#f7a90d"/>
        <g stroke="#3f2a00" stroke-width=".6" stroke-linejoin="round">
          <polygon points="593.800,682 1142,300.400 1169.300,364.900 638.600,731" fill="#a05f00"/>
          <polygon points="1146,301.200 1278.800,448.200 1257.900,461.600 1169.300,364.900" fill="#835000"/>
          <polygon points="640.600,733 796.300,626 883.300,720 728,829" fill="#ffc90a"/>
          <polygon points="824.600,606.500 919,540.400 1010,634.300 914,700.400" fill="#ffc90a"/>
          <polygon points="949,520.800 1045,453.500 1134.500,549.400 1037.500,614.700" fill="#ffc90a"/>
          <polygon points="1073.300,434.300 1169.300,367.800 1258.800,462.900 1161.900,528.200" fill="#ffc90a"/>
          <polygon points="772.900,555.500 908.200,704.500 885.800,720 796.300,623.700" fill="#835000"/>
          <polygon points="898.200,469.800 1032.500,618 1010,633 919,538" fill="#835000"/>
          <polygon points="1022.600,384 1156.900,531 1134.500,547.300 1045,451.400" fill="#835000"/>
          <polygon points="585.900,682 726.600,833 754,901 609.700,747.300" fill="#8c5400"/>
          <polygon points="726.600,833 1287.200,449.400 1314,514.700 754,901" fill="#a05f00"/>
        </g>
        <g fill="none" stroke="#f7a90d" stroke-linecap="round">
          <path d="M588 682 1146 297" stroke-width="3.600"/>
          <path d="M1146 297 1284 447" stroke-width="3.600"/>
          <path d="M1283 449 728 829" stroke-width="3.600"/>
          <path d="M726 829 588 683" stroke-width="3"/>
          <path d="M772 556 908 703" stroke-width="3.400"/>
          <path d="M897 470 1033 618" stroke-width="3.400"/>
          <path d="M1022 384 1157 531" stroke-width="3.400"/>
          <path d="M1287 449 1314 514" stroke="#b87200" stroke-width="2"/>
        </g>
        <g fill="none" stroke="#f7a90d" stroke-width="2">
          <path d="M640 732 796 625M824 605 919 539M949 519 1045 452M1073 432 1169 366"/>
          <path d="M796 625 883 720M919 539 1010 634M1045 452 1135 548M1169 366 1259 462"/>
        </g>
        <g fill="none" stroke="#4a3000" stroke-width=".55">
          <path d="M585.500 680 1146 293.500 1287.500 447 726.500 834 585.500 680"/>
          <path d="M593.800 684 1142 303M1148 303 1279 447M1279 451 729 826M724 826 592 686"/>
          <path d="M642 734 796.300 628 883 722M826 608 919 542 1010 636M951 523 1045 455 1135 551M1075 437 1169 370 1259 465"/>
          <path d="M770 556 908 706M775 554 910 702M895 471 1033 620M900 468 1035 616M1020 385 1157 533M1025 382 1159 529"/>
          <path d="M772 556 796 624M898 470 919 538M1023 384 1045 451M1146 298 1169 365"/>
          <path d="M727 833 754 901"/>
        </g>
        <g fill="#f7a90d" stroke="#4a3000" stroke-width=".5">
          <circle cx="589" cy="681" r="3"/><circle cx="773" cy="554" r="3"/><circle cx="898" cy="468" r="3"/><circle cx="1022" cy="382" r="3"/><circle cx="1146" cy="296" r="3"/>
          <circle cx="1284" cy="446" r="3"/><circle cx="1157" cy="531" r="2.600"/><circle cx="1033" cy="617" r="2.600"/><circle cx="908" cy="703" r="2.600"/><circle cx="727" cy="830" r="2.600"/>
        </g>
        <path d="M1630 982c4-2 10-3 15-3l1 3z" fill="#ff6a28"/>
        <g class="triad">
          <path d="M372 901l17-8 14 18-14 11-17-9z" fill="#c8c8ca" stroke="#a6a6a8"/>
          <path d="M372 901l14 15 3 6M386 916l17-5M389 893l-3 23" fill="none" stroke="#aeaeb0"/>
          <path d="M383 932 364 910" stroke="#5bb04a" stroke-width="2"/>
          <path d="M383 932 374 909" stroke="#1240c8" stroke-width="3"/>
          <path d="M383 932 414 909" stroke="#d84a4a" stroke-width="2.500"/>
          <circle cx="383" cy="932" r="4" fill="#eee" stroke="#aaa"/>
          <text x="355" y="911" class="ax axy">Y</text>
          <text x="368" y="911" class="ax axz">Z</text>
          <text x="415" y="912" class="ax axx">X</text>
        </g>
      </svg>
    </div>
  </section>
</main>

<svg class="wm" aria-hidden="true">
  <defs>
    <pattern id="wmp" patternUnits="userSpaceOnUse" x="52" y="43" width="209" height="160">
      <g transform="translate(2 82) rotate(-28)">
        <text x="0" y="0" class="wm3d">3D</text>
        <text x="54" y="-16" class="wmt">打印资源库</text>
        <text x="56" y="0" class="wmu">www.3dzyk.cn</text>
      </g>
    </pattern>
  </defs>
  <rect width="1911" height="982" fill="url(#wmp)"/>
</svg>
</body>
</html>
```

FILE: styles.css
```css
* { box-sizing: border-box; }
html, body { margin: 0; padding: 0; height: 100%; }
body {
  width: 1911px; height: 982px; overflow: hidden;
  display: flex; flex-direction: column;
  background: #fff; color: #111;
  font-family: "Noto Sans", "Noto Sans CJK SC", sans-serif;
  font-size: 17px; line-height: 20px;
}
i, em { font-style: normal; }
svg { display: block; flex: none; }
.defs { position: absolute; width: 0; height: 0; }
.s12 { width: 12px; height: 12px; } .s14 { width: 14px; height: 14px; } .s16 { width: 16px; height: 16px; }
.s18 { width: 18px; height: 18px; } .s20 { width: 20px; height: 20px; } .s24 { width: 22px; height: 22px; }
.s30 { width: 30px; height: 30px; } .s32 { width: 32px; height: 32px; } .s34 { width: 34px; height: 34px; }
.caret { display: block; width: 0; height: 0; border: 4px solid transparent; border-top: 5px solid #111; border-bottom: 0; flex: none; }
.caret.up { border-top: 0; border-bottom: 5px solid #bdbdbd; }
.caret.big { border-width: 5px; border-top-width: 6px; border-bottom: 0; }
.caret.ml { margin-left: 13px; }

/* title bar */
.titlebar {
  height: 34px; flex: none; display: grid; align-items: center; justify-items: center;
  grid-template-columns: 50px 2px 30px 26px 16px 24px 4px 25px 23px 23px 23px 4px 26px 14px 8px 22px 6px 23px 71px 24px 36px 14px 18px 654px 650px 30px 40px 25px;
}
.logo { justify-self: start; padding-left: 5px; font: 700 28px/34px "Liberation Sans", sans-serif; color: #7794ab; letter-spacing: -.5px; }
.cell { display: flex; align-items: center; justify-content: center; width: 100%; height: 100%; }
.cell.sep::after { content: ""; width: 1px; height: 26px; background: #d2d2d2; }
.qtext { font-size: 16px; justify-self: start; padding-left: 2px; white-space: nowrap; }
.apptitle { font-size: 17px; white-space: nowrap; justify-self: end; }
.siemens { font: 700 16.500px/34px "Liberation Sans", sans-serif; color: #1b9a9c; letter-spacing: .3px; justify-self: end; padding-right: 23px; }
.winbtn { width: 100%; height: 100%; display: flex; align-items: center; justify-content: center; }
.winbtn.min::after { content: ""; width: 10px; height: 2px; background: #333; margin-top: 10px; }
.winbtn.rest::after { content: ""; width: 10px; height: 9px; border: 1.500px solid #333; box-shadow: 2px -2px 0 -.5px #fff, 3px -3px 0 0 #333; }
.winbtn.close { font-size: 15px; color: #222; padding-left: 6px; }

/* tabs */
.tabs { height: 38px; flex: none; background: #d9d9d9; display: flex; align-items: stretch; }
.filetab { width: 104px; margin-right: 2px; background: #529fb9; color: #fff; font-size: 20px; line-height: 38px; text-align: center; }
.tab { width: 68.500px; font-size: 20px; line-height: 38px; text-align: center; white-space: nowrap; }
.tab.wide { width: 84px; margin-left: 14px; }
.tab.active { background: #fff; color: #00708c; border-top: 1px solid #c4c4c4; line-height: 36px; }
.search {
  width: 177px; height: 26px; margin: 5px 0 0 auto; padding: 0 6px; background: #fff; border: 1px solid #aaa;
  display: flex; align-items: center; justify-content: space-between; font-size: 16px; color: #a8a8a8; line-height: 24px;
}
.fullbtn { width: 32px; height: 36px; margin: 1px 0 0 12px; }
.upbtn { width: 26px; height: 18px; margin: 10px 0 0 14px; }
.helpbtn { width: 26px; height: 32px; margin: 3px 3px 0 14px; }
.t-q { font: 700 24px "Liberation Sans", sans-serif; fill: #fff; text-anchor: middle; }
.t-i { font: 700 20px "Liberation Serif", serif; fill: #fff; text-anchor: middle; }

/* ribbon */
.ribbon { height: 117px; flex: none; display: flex; align-items: flex-start; border-bottom: 2px solid #e0e0e0; }
.grp { height: 110px; margin-top: 4px; border-right: 1px solid #dadada; display: flex; flex-direction: column; flex: none; }
.g1 { width: 176px; } .g2 { width: 457px; } .g3 { width: 215px; } .g4 { width: 104px; } .g5 { width: 52px; } .g6 { width: 58px; }
.g7 { width: 52px; } .g8 { width: 98px; } .g9 { width: 29px; } .g10 { width: 288px; } .g11 { width: 45px; } .g12 { width: 232px; }
.g13 { width: 57px; } .g14 { width: 48px; border-right: 0; }
.gbody { height: 91px; flex: none; display: grid; align-items: start; justify-items: center; }
.glabel { height: 18px; line-height: 18px; display: flex; align-items: center; color: #006a86; white-space: nowrap; overflow: visible; }
.glabel span { flex: 1; text-align: center; min-width: 0; }
.glabel .caret { margin: 0 10px; }
.glabel.end { justify-content: flex-end; }
.glabel.end .caret { margin: 0 0 0 auto; }
.b1 { grid-template-columns: 59px 86px 31px; }
.b2 { grid-template-columns: 78px 40px 40px 100px 60px 80px 52px; padding-left: 7px; }
.b3 { grid-template-columns: 60px 100px 48px; padding-left: 7px; }
.b11 { grid-template-columns: 1fr; }
.b12 { grid-template-columns: 78px 40px 106px; padding-left: 8px; }
.lg { display: flex; flex-direction: column; align-items: center; padding-top: 2px; white-space: nowrap; }
.lg > span { margin-top: 5px; }
.lg > .caret { margin-top: 8px; }
.lg.off { color: #c2c2c2; }
.more { padding-top: 0; }
.morebox { width: 37px; height: 36px; border: 1px solid #d8d8d8; border-radius: 3px; display: flex; align-items: center; justify-content: center; }
.more > span { margin-top: 3px; }
.gallery { width: 86px; height: 86px; margin-top: 2px; border: 1px solid #d8d8d8; display: grid; grid-template-columns: 1fr 1fr; place-items: center; padding: 3px; }
.galside { height: 88px; display: flex; flex-direction: column; align-items: center; justify-content: space-between; padding: 10px 0 10px; }
.col { justify-self: start; display: grid; grid-auto-rows: 29.500px; margin-top: -3px; }
.pl8 { padding-left: 8px; } .pl6 { padding-left: 6px; } .pl5 { padding-left: 5px; }
.sm { display: flex; align-items: center; gap: 3px; white-space: nowrap; }
.ig { grid-auto-rows: 32px; padding-top: 3px; align-items: center; }
.ig4 { grid-template-columns: 23px 25px 26px 26px; padding-left: 3px; }
.ig5 { grid-template-columns: 22px 22px; padding-left: 5px; }
.ig6 { grid-template-columns: 24px 25px; padding-left: 5px; }
.ig7 { grid-template-columns: 22px 24px; padding-left: 5px; }
.ig8 { grid-template-columns: 22px 23px 23px 23px; padding-left: 6px; }
.ig9 { grid-template-columns: 1fr; }
.ig10 { grid-template-columns: 27px 25px 23px 23px 23px 23px 23px 23px 23px 23px 23px 24px; padding-left: 4px; }
.lsep, .rsep { display: flex; align-items: center; justify-content: center; width: 100%; height: 24px; }
.lsep { border-left: 1px solid #cfcfcf; }
.rsep { border-right: 1px solid #cfcfcf; }
.tol { display: flex; flex-direction: column; align-items: center; font: 400 10px/10px "Liberation Sans", sans-serif; color: #333; }
.tol b { font-weight: 400; }
.tol em { color: #a83a3a; font-size: 8px; line-height: 7px; text-align: center; }
.tol em.gr { color: #999; }
.fit { font: 400 9px/9px "Liberation Sans", sans-serif; color: #4a5ac8; text-align: center; white-space: nowrap; }
.fit sup { font-size: 6px; line-height: 0; }
.t-10h { font: 700 8px "Liberation Sans", sans-serif; fill: #333; }
.t-r { font: 700 6px "Liberation Sans", sans-serif; fill: #c42020; }

/* toolbar */
.toolbar {
  height: 63px; flex: none; padding-left: 10px; border-bottom: 2px solid #a8a8a8;
  display: grid; align-items: center; justify-items: center;
  grid-template-columns: 34px 63px 11px 18px 201px 202px 38px 51px 30px 20px 40px 40px 44px 36px 20px 41px 43px 40px 42px 39px 43px 40px 39px 43px 39px 43px 42px 39px 40px 34px 14px 40px 42px 40px 42px 42px 40px 16px 40px 18px 35px 16px 12px 1fr;
}
.menutext { white-space: nowrap; }
.vsep { width: 1px; height: 56px; background: #cfcfcf; }
.combo { width: 191px; height: 26px; justify-self: start; border: 1px solid #999; display: flex; align-items: center; justify-content: space-between; padding: 0 6px; font-size: 16px; line-height: 24px; }
.combo.wide2 { width: 202px; }
.tile { width: 39px; height: 38px; background: #cce4ea; border: 1px solid #a9d2de; display: flex; align-items: center; justify-content: center; justify-self: start; }
.stack { display: flex; flex-direction: column; align-items: center; gap: 6px; }
.stack.carets { gap: 28px; }
.tbend { justify-self: end; align-self: end; padding: 0 0 10px; }

/* workspace */
.work { flex: 1; min-height: 0; display: flex; }
.strip {
  width: 40px; flex: none; background: #dcdcdc; border-right: 1px solid #9c9c9c;
  display: grid; grid-template-rows: 26px 16px 50px 48px 54px 46px 84px 36px 86px 12px 94px; justify-items: center; align-items: center;
}
.st { display: flex; justify-content: center; align-items: center; width: 100%; height: 100%; }
.st.on { background: #fff; border: 1px solid #bbb; border-right: 0; margin-left: 2px; width: 39px; margin-right: -1px; }
.nav { width: 285px; flex: none; background: #fff; border-right: 1px solid #9c9c9c; padding: 0 9px 0 6px; display: flex; flex-direction: column; }
.navhead { height: 36px; padding: 3px 7px 0 4px; display: flex; align-items: center; justify-content: space-between; font-size: 18px; }
.wmaxi { width: 16px; height: 14px; }
.tree { border: 1px solid #ddd; height: 354px; flex: none; font-size: 18px; }
.thead { height: 28px; background: #f0f0f0; display: grid; grid-template-columns: 200px 1fr; line-height: 28px; border-bottom: 1px solid #ddd; }
.th1 { display: flex; align-items: center; padding-left: 6px; border-right: 1px solid #d6d6d6; }
.th2 { padding-left: 6px; font-size: 17px; }
.caret.upb { margin-left: 19px; border-width: 7px; border-top: 0; border-bottom: 7px solid #222; }
.row { height: 28px; display: grid; grid-template-columns: 200px 1fr; border-bottom: 1px solid #ececec; }
.row.alt { background: #fcfcfc; }
.row.alt2 { background: #f8f8f8; }
.row.short { height: 19px; border-bottom: 0; }
.row > div:first-child { border-right: 1px solid #f0f0f0; }
.nm { position: relative; display: flex; align-items: center; padding: 1px 0 0 4px; gap: 2px; white-space: nowrap; }
.exp { width: 13px; height: 13px; border: 1px solid #ddd; font: 400 14px/10px "Liberation Sans", sans-serif; text-align: center; margin-right: -1px; background: #fff; flex: none; position: relative; z-index: 1; }
.leaf { padding-left: 40px; }
.leaf svg + svg { margin-left: -3px; }
.leaf::before { content: ""; position: absolute; left: 28px; top: -1px; width: 11px; height: 15px; border-left: 1px dotted #999; border-bottom: 1px dotted #999; }
.dotdown::before { content: ""; position: absolute; left: 10px; top: -14px; height: 56px; border-left: 1px dotted #999; }
.dim { color: #a8a8a8; }
.nm strong { font-weight: 700; }
.ok { display: flex; align-items: center; padding-left: 6px; }
.hscroll { height: 25px; background: #f0f0f0; display: flex; align-items: center; justify-content: space-between; }
.arrow { width: 12px; height: 14px; margin: 0 8px; }
.thumb { align-self: stretch; background: #c8c8c8; }
.thumb.t1 { width: 141px; margin-right: auto; }
.thumb.t2 { width: 210px; margin-right: auto; }
.splitter { height: 5px; margin-top: 1px; flex: none; background: #d4d4d4; border: 1px solid #a8a8a8; }
.sect { height: 33px; padding: 0 0 0 9px; display: flex; align-items: center; justify-content: space-between; color: #006a86; font-size: 21px; flex: none; }
.sect.first { height: 32px; padding-top: 1px; }
.sect.line { border-bottom: 3px solid #d6d6d6; }
.sect.open { height: 30px; }
.chev { width: 18px; height: 14px; }
.prevwrap { flex: 1; min-height: 0; border-left: 1px solid #ccc; padding: 5px 7px 0 14px; border-bottom: 1px solid #ddd; }
.preview { height: 184px; border: 1px solid #ddd; display: flex; align-items: center; justify-content: center; font-size: 18px; }
.hscroll.low { height: 21px; flex: none; }
.gfx { flex: 1; min-width: 0; display: flex; flex-direction: column; }
.doctabs { height: 32px; flex: none; display: flex; border-bottom: 2px solid #529fb9; border-left: 1px solid #999; }
.doc { display: flex; align-items: center; padding-left: 4px; font-size: 18px; gap: 6px; width: 110px; }
.doc.cur { width: 164px; background: #529fb9; color: #fff; }
.docpin { width: 8px; height: 8px; border: 2px solid #fff; margin-left: 3px; }
.docx { font-size: 12px; font-weight: 700; margin-left: 1px; }
.viewport { flex: 1; min-height: 0; background: linear-gradient(#adafb2 0%, #c6c8ca 30%, #dcdde0 65%, #e6e7e9 100%); border-left: 1px solid #999; }
.model { width: 1586px; height: 698px; }
.ax { font: 400 11px "Liberation Sans", sans-serif; }
.axx { fill: #d84a4a; } .axy { fill: #5bb04a; } .axz { fill: #1240c8; }

/* watermark */
.wm { position: fixed; left: 0; top: 0; width: 1911px; height: 982px; pointer-events: none; }
.wm3d { font: 700 44px "Liberation Sans", sans-serif; fill: rgba(255,255,255,.06); stroke: rgba(110,110,110,.14); stroke-width: 1; }
.wmt { font: 400 19px "Noto Sans CJK SC", sans-serif; fill: rgba(255,255,255,.05); stroke: rgba(110,110,110,.14); stroke-width: .6; }
.wmu { font: 700 14px "Liberation Sans", sans-serif; fill: rgba(255,255,255,.05); stroke: rgba(110,110,110,.14); stroke-width: .4; }
```
